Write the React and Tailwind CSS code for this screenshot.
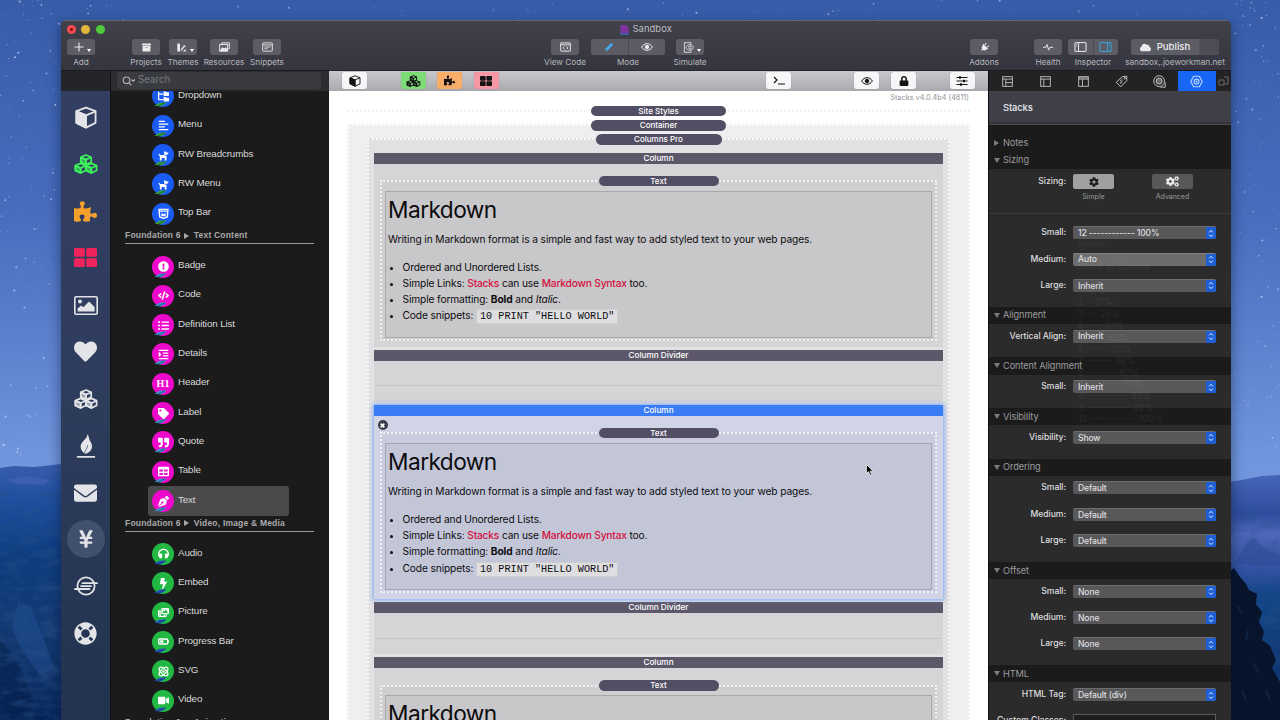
import React from 'react';
import {
  FaAlignLeft, FaArchive, FaBolt, FaCloud, FaCode, FaCog, FaCogs, FaDog, FaEnvelope, FaExclamationCircle,
  FaHeadphones, FaHeart, FaIndent, FaLifeRing, FaListUl, FaLock, FaPenNib, FaPlug, FaPuzzlePiece,
  FaQuoteRight, FaTable, FaTag, FaVideo, FaYenSign,
} from 'react-icons/fa';
import { FaFolderTree, FaPhotoFilm } from 'react-icons/fa6';

const SANS = "font-['Inter','Liberation_Sans',sans-serif]";
const HELV = "font-['Liberation_Sans',sans-serif]";

/* ---------- icons ---------- */

function CubeIcon({ className }) {
  return (
    <svg viewBox="0 0 24 24" className={className} fill="none" stroke="currentColor" strokeWidth="1.9" strokeLinejoin="round">
      <path d="M12 1.6 22 5.4V17.6L12 22.6 2 17.6V5.4Z" />
      <path d="M2 5.6 12 9.8 22 5.6M12 9.8V22.4" />
      <path d="M2 5.6 12 9.8V22.4L2 17.6Z" fill="currentColor" />
    </svg>
  );
}

function CubesIcon({ className }) {
  return (
    <svg viewBox="0 0 24 20" className={className} fill="none" stroke="currentColor" strokeWidth="1.7" strokeLinejoin="round">
      {[[6.4, 1], [1, 9.4], [11.8, 9.4]].map(([x, y]) => (
        <g key={`${x}-${y}`} transform={`translate(${x} ${y})`}>
          <path d="M5.6 0 10.8 2.2V7.2L5.6 9.6.4 7.2V2.2Z" />
          <path d="M.4 2.3 5.6 4.6 10.8 2.3M5.6 4.6V9.6" />
          <path d="M.4 2.3 5.6 4.6V9.6L.4 7.2Z" fill="currentColor" fillOpacity="0.6" />
        </g>
      ))}
    </svg>
  );
}

function GridIcon({ className }) {
  return (
    <svg viewBox="0 0 23 19" className={className} fill="currentColor">
      <rect width="10.8" height="8.8" rx="1.5" />
      <rect x="12.2" width="10.8" height="8.8" rx="1.5" />
      <rect y="10.2" width="10.8" height="8.8" rx="1.5" />
      <rect x="12.2" y="10.2" width="10.8" height="8.8" rx="1.5" />
    </svg>
  );
}

function PhotoIcon({ className }) {
  return (
    <svg viewBox="0 0 24 19" className={className} fill="currentColor">
      <rect x="0.8" y="0.8" width="22.4" height="17.4" rx="1.2" fill="none" stroke="currentColor" strokeWidth="1.6" />
      <circle cx="6" cy="5.6" r="2" />
      <path d="M3.6 15.6V12.6L7.2 9.4 9.4 11.2 15 5.6 20.6 11V15.6Z" />
    </svg>
  );
}

function FlameIcon({ className }) {
  return (
    <svg viewBox="0 0 20 24" className={className} fill="currentColor">
      <path d="M11.2 0C12.2 4.600 4.600 7.400 4.600 12.600c0 3.400 2 5.600 4.600 7.400 4.200-1.400 6.800-4.200 6.800-7.600C16 9.600 14.800 8.600 13.800 6.600 13 4.800 13 2 11.200 0Z" />
      <path d="M9.200 20C7.800 16.500 12 14.500 11.600 11" stroke="#2c3d60" strokeWidth="0.700" fill="none" />
      <rect x="0.800" y="22" width="18.400" height="1.700" rx="0.600" />
    </svg>
  );
}

function PlanetIcon({ className }) {
  return (
    <svg viewBox="0 0 24 20" className={className} fill="none" stroke="currentColor" strokeWidth="1.800" strokeLinecap="round">
      <circle cx="12" cy="10" r="8.600" />
      <path d="M8.500 7.200H23M7 10.100H17M1 13H15.500" />
    </svg>
  );
}

function EyeIcon({ className }) {
  return (
    <svg viewBox="0 0 24 16" className={className} fill="none" stroke="currentColor" strokeWidth="2">
      <path d="M1.200 8C4 3.500 7.800 1.400 12 1.400S20 3.500 22.800 8C20 12.500 16.200 14.600 12 14.600S4 12.500 1.200 8Z" />
      <circle cx="12" cy="8" r="3.600" fill="currentColor" />
    </svg>
  );
}

function TopBarIcon({ className }) {
  return (
    <svg viewBox="0 0 16 16" className={className} fill="none" stroke="currentColor" strokeWidth="2">
      <path d="M1.500 2H14.500L13.500 13 8 15 2.500 13Z" />
      <path d="M2 4.500H14" />
      <path d="M5 7 8 9.500 11 7V12H5Z" fill="currentColor" stroke="none" />
    </svg>
  );
}

function ProgressIcon({ className }) {
  return (
    <svg viewBox="0 0 16 10" className={className} fill="none" stroke="currentColor" strokeWidth="2">
      <rect x="1" y="1.300" width="13" height="7.400" rx="1.500" />
      <path d="M15.200 3.500V6.500" />
      <rect x="3" y="3.300" width="5" height="3.400" fill="currentColor" stroke="none" />
    </svg>
  );
}

function AtomIcon({ className }) {
  return (
    <svg viewBox="0 0 16 16" className={className} fill="none" stroke="currentColor" strokeWidth="1.800">
      <ellipse cx="8" cy="8" rx="8" ry="3.800" transform="rotate(45 8 8)" />
      <ellipse cx="8" cy="8" rx="8" ry="3.800" transform="rotate(-45 8 8)" />
      <circle cx="8" cy="8" r="1" fill="currentColor" />
    </svg>
  );
}

function H1Icon() {
  return <span className="font-['Liberation_Serif',serif] text-[10px] leading-none font-bold">H1</span>;
}

function ThemesIcon({ className }) {
  return (
    <svg viewBox="0 0 16 14" className={className} fill="currentColor">
      <rect x="0.500" y="0.500" width="4.200" height="13" rx="1" />
      <path d="M6 9.500 11.500 2.500 14 4.500 7 12.500H6Z" opacity="0.800" />
      <path d="M9.500 12.800 14 9.500V13.500H8.500Z" />
    </svg>
  );
}

function ResourcesIcon({ className }) {
  return (
    <svg viewBox="0 0 16 14" className={className} fill="none" stroke="currentColor" strokeWidth="1.400">
      <path d="M4 3.500V1H15V9.500H13" />
      <rect x="1" y="3.500" width="11.500" height="9.500" />
      <path d="M2 12 5 8 7.500 10 9.500 8 12 11V12.500H2Z" fill="currentColor" />
    </svg>
  );
}

function SnippetsIcon({ className }) {
  return (
    <svg viewBox="0 0 16 14" className={className} fill="none" stroke="currentColor" strokeWidth="1.300">
      <rect x="1" y="1" width="14" height="12" rx="0.800" />
      <path d="M1 4H15M3.500 7H12.500M3.500 9.500H8" />
    </svg>
  );
}

function ViewCodeIcon({ className }) {
  return (
    <svg viewBox="0 0 16 14" className={className} fill="none" stroke="currentColor" strokeWidth="1.400">
      <rect x="1" y="1" width="14" height="12" rx="0.500" />
      <path d="M1 3.800H15M6.500 6.200 4.500 8.300 6.500 10.400M9.500 6.200 11.500 8.300 9.500 10.400" />
    </svg>
  );
}

function SimulateIcon({ className }) {
  return (
    <svg viewBox="0 0 16 16" className={className} fill="none" stroke="currentColor" strokeWidth="1.200">
      <path d="M11.500 3.500V1H2V15H11.500V12.500" />
      <path d="M4 8C6 4.800 8 4 10 4S14 5 15.500 8C14 11 12 12 10 12S6 11.200 4 8Z" />
      <circle cx="10" cy="8" r="2" />
    </svg>
  );
}

function PencilIcon({ className }) {
  return (
    <svg viewBox="0 0 16 16" className={className} fill="currentColor">
      <path d="M2 14 3 10 11.500 1.500 14.500 4.500 6 13Z" />
    </svg>
  );
}

function PanelIcon({ className, right }) {
  return (
    <svg viewBox="0 0 16 13" className={className} fill="none" stroke="currentColor" strokeWidth="1.300">
      <rect x="0.800" y="0.800" width="14.400" height="11.400" rx="0.500" />
      <path d={right ? 'M10.500 1V12M12.500 3.500H13.700M12.500 5.500H13.700' : 'M5.500 1V12M2.500 3.500H3.700M2.500 5.500H3.700'} />
    </svg>
  );
}

function PulseIcon({ className }) {
  return (
    <svg viewBox="0 0 16 12" className={className} fill="none" stroke="currentColor" strokeWidth="1.500" strokeLinejoin="round">
      <path d="M0 6.500H4.500L6.500 2 9 11 11 6.500H16" />
    </svg>
  );
}

function LayoutIcon({ className, variant }) {
  const paths = ['M1 4.500H15M5.500 4.500V15M5.500 9.500H15', 'M1 4.500H15M5.500 4.500V15', 'M1 4.500H15M6.500 4.500V15M1 2.800H15'];
  return (
    <svg viewBox="0 0 16 16" className={className} fill="none" stroke="currentColor" strokeWidth="1.300">
      <rect x="1" y="1" width="14" height="14" />
      <path d={paths[variant]} />
    </svg>
  );
}

function PriceTagIcon({ className }) {
  return (
    <svg viewBox="0 0 16 16" className={className} fill="none" stroke="currentColor" strokeWidth="1.200" strokeLinejoin="round">
      <path d="M9 2 14.500 1.500 14.500 7 7 14.500 1.500 9Z" />
      <circle cx="12" cy="4" r="0.900" />
      <path d="M9.500 6.500C7.500 5 6 7 7.500 8S8.500 10.800 6 9.500" />
    </svg>
  );
}

function TargetIcon({ className }) {
  return (
    <svg viewBox="0 0 16 16" className={className} fill="none" stroke="currentColor" strokeWidth="1.200">
      <circle cx="7.500" cy="7.500" r="6.600" />
      <circle cx="7.500" cy="7.500" r="3.700" fill="currentColor" fillOpacity="0.450" />
      <path d="M9 15H15V9" />
    </svg>
  );
}

function HexIcon({ className }) {
  return (
    <svg viewBox="0 0 16 16" className={className} fill="none" stroke="currentColor" strokeWidth="1.400">
      <path d="M4.500 1.500H11.500L15 8 11.500 14.500H4.500L1 8Z" strokeLinejoin="round" />
      <circle cx="8" cy="8" r="3" />
      <circle cx="8" cy="8" r="0.600" />
    </svg>
  );
}

/* ---------- desktop ---------- */

function rand(seed) {
  const n = Math.sin(seed * 127.1) * 43758.5453;
  return n - Math.floor(n);
}

const STARS = Array.from({ length: 520 }, (_, i) => {
  const side = i % 5;
  const x = side < 2 ? rand(i + 1) * 61 : side < 4 ? 1231 + rand(i + 1) * 49 : rand(i + 1) * 1280;
  const y = side === 4 ? rand(i + 900) * 20 : Math.pow(rand(i + 900), 1.6) * 460;
  return { x, y, r: 0.3 + Math.pow(rand(i + 3000), 5) * 0.8, o: 0.2 + rand(i + 5000) * 0.5 };
});

function Desktop() {
  return (
    <svg viewBox="0 0 1280 720" className="absolute inset-0 h-full w-full">
      <defs>
        <linearGradient id="sky" x1="0" y1="0" x2="0" y2="1">
          <stop offset="0" stopColor="#375da9" />
          <stop offset="0.300" stopColor="#476dbd" />
          <stop offset="0.640" stopColor="#7096dd" />
        </linearGradient>
        <linearGradient id="hillLeft" x1="0" y1="0" x2="0" y2="1">
          <stop offset="0" stopColor="#385dac" />
          <stop offset="0.140" stopColor="#1f4f9f" />
          <stop offset="0.350" stopColor="#0e3d80" />
          <stop offset="0.700" stopColor="#12386f" />
          <stop offset="1" stopColor="#06265a" />
        </linearGradient>
        <linearGradient id="hillRight" x1="0" y1="0" x2="0" y2="1">
          <stop offset="0" stopColor="#4565b6" />
          <stop offset="0.160" stopColor="#2f4d9f" />
          <stop offset="0.240" stopColor="#5068ba" />
          <stop offset="0.380" stopColor="#3553a4" />
          <stop offset="0.480" stopColor="#144688" />
          <stop offset="1" stopColor="#0b2d63" />
        </linearGradient>
        <filter id="rock" x="0" y="0" width="1" height="1">
          <feTurbulence type="fractalNoise" baseFrequency="0.05 0.12" numOctaves="4" seed="4" />
          <feColorMatrix values="0 0 0 0 0.02  0 0 0 0 0.08  0 0 0 0 0.25  2.2 0 0 0 -0.9" />
        </filter>
      </defs>
      <rect width="1280" height="720" fill="url(#sky)" />
      {STARS.map((s, i) => <circle key={i} cx={s.x} cy={s.y} r={s.r} fill="#dbe6ff" opacity={s.o} />)}
      <path d="M0 468 14 466 34 467 61 464V720H0Z" fill="url(#hillLeft)" />
      <path d="M5 480 24 476 50 480 44 485 18 484Z" fill="#4f6cba" opacity="0.450" />
      <path d="M18 602 30 606 44 640 54 668 40 676 22 650 12 628Z" fill="#2c5ca6" opacity="0.350" />
      <path d="M0 640 16 660 30 690 42 720H0Z" fill="#041c44" opacity="0.450" />
      <rect x="0" y="490" width="61" height="230" filter="url(#rock)" opacity="0.600" />
      <path d="M1200 486 1236 481 1262 476 1280 475V720H1200Z" fill="url(#hillRight)" />
      <path d="M1236 562 1246 544 1254 538 1266 550 1280 556V566L1256 566Z" fill="#2a478f" opacity="0.500" />
      <rect x="1231" y="500" width="49" height="220" filter="url(#rock)" opacity="0.450" />
      <path d="M1225 575 1234 568 1240 577 1246 584 1249 590 1257 594 1256 604 1262 612 1259 622 1264 632 1262 640 1270 646 1276 660 1272 668 1280 682V720H1225Z" fill="#07142b" />
      <path d="M1238 606 1242 614M1248 630 1246 640M1254 664 1258 672M1242 690 1246 700M1266 690 1270 700" stroke="#16325c" strokeWidth="2" fill="none" opacity="0.500" />
    </svg>
  );
}

/* ---------- toolbar ---------- */

function ToolItem({ label, className, children }) {
  return (
    <div className={`flex shrink-0 flex-col items-center ${className}`}>
      <div className="flex h-4 w-full overflow-hidden rounded-[3px] bg-[#5b5c64] text-[#ececee]">{children}</div>
      <span className="mt-px text-[8.200px] leading-[12px] whitespace-nowrap text-[#b6b7bd]">{label}</span>
    </div>
  );
}

function Cell({ children, className = '' }) {
  return <div className={`flex flex-1 items-center justify-center ${className}`}>{children}</div>;
}

function Caret() {
  return <span className="mt-[7px] ml-[3px] h-0 w-0 border-x-2 border-t-[3px] border-x-transparent border-t-white" />;
}

function Toolbar() {
  return (
    <header className="h-[50px] border-t border-[#62646d] bg-gradient-to-b from-[#40414a] to-[#34353e]">
      <div className="flex h-[17px] items-center pl-[5.500px]">
        <div className="flex w-[200px] gap-[5.600px]">
          <span className="flex h-[9px] w-[9px] items-center justify-center rounded-full bg-[#f64c50]"><i className="h-[3px] w-[3px] rounded-full bg-[#7c0a0c]" /></span>
          <span className="h-[9px] w-[9px] rounded-full bg-[#dfb63a]" />
          <span className="h-[9px] w-[9px] rounded-full bg-[#4fc93c]" />
        </div>
        <div className="ml-[353px] flex items-center gap-[4px] text-[9.500px] text-[#bcbdc2]">
          <svg viewBox="0 0 9 11" className="h-[10px] w-[9px]">
            <path d="M0 0H6.500L9 2.500V11H0Z" fill="#7d369c" />
            <path d="M0 9H9V11H0Z" fill="#3c5fb0" />
          </svg>
          Sandbox
        </div>
      </div>
      <div className="flex pt-px pl-[6px]">
        <ToolItem label="Add" className="w-7">
          <Cell className="pl-[3px]">
            <svg viewBox="0 0 10 10" className="h-[10px] w-[10px] shrink-0" stroke="currentColor" strokeWidth="1.100"><path d="M5 .5V9.500M.5 5H9.500" /></svg>
            <Caret />
          </Cell>
        </ToolItem>
        <ToolItem label="Projects" className="ml-[37px] w-7"><Cell><FaArchive className="h-[9px] w-[9px]" /></Cell></ToolItem>
        <ToolItem label="Themes" className="ml-[9px] w-7"><Cell className="pl-1"><ThemesIcon className="h-[9px] w-[10px]" /><Caret /></Cell></ToolItem>
        <ToolItem label="Resources" className="ml-[13px] w-7"><Cell><ResourcesIcon className="h-[10px] w-[11px]" /></Cell></ToolItem>
        <ToolItem label="Snippets" className="ml-[15px] w-7"><Cell><SnippetsIcon className="h-[10px] w-[11px]" /></Cell></ToolItem>
        <ToolItem label="View Code" className="ml-[270px] w-7"><Cell><ViewCodeIcon className="h-[10px] w-[11px]" /></Cell></ToolItem>
        <ToolItem label="Mode" className="ml-[12px] w-[74px]">
          <Cell className="border-r border-[#494a52]"><PencilIcon className="h-[10px] w-[10px] text-[#45aef0]" /></Cell>
          <Cell><EyeIcon className="h-[8px] w-[12px]" /></Cell>
        </ToolItem>
        <ToolItem label="Simulate" className="ml-[11px] w-7"><Cell className="pl-1"><SimulateIcon className="h-[11px] w-[11px]" /><Caret /></Cell></ToolItem>
        <ToolItem label="Addons" className="ml-[266px] w-7"><Cell><FaPlug className="h-[9px] w-[9px] rotate-45" /></Cell></ToolItem>
        <ToolItem label="Health" className="ml-[36px] w-7"><Cell><PulseIcon className="h-[8px] w-[10px]" /></Cell></ToolItem>
        <ToolItem label="Inspector" className="ml-[6px] w-[50px]">
          <Cell className="border-r border-[#494a52]"><PanelIcon className="h-[10px] w-[13px]" /></Cell>
          <Cell><PanelIcon right className="h-[10px] w-[13px] text-[#38a5e2]" /></Cell>
        </ToolItem>
        <ToolItem label="sandbox,.joeworkman.net" className="ml-[13px] w-[88px]">
          <Cell className="gap-[6px] text-[9.600px] font-medium"><FaCloud className="h-[11px] w-[11px]" />Publish</Cell>
          <span className="w-[20px] border-l border-[#53545c] bg-[#4c4d55] text-center text-[8px] leading-4 text-[#5a5b62]">–</span>
        </ToolItem>
      </div>
    </header>
  );
}

/* ---------- left side ---------- */

const RAIL = [
  { name: 'cube', icon: CubeIcon, cls: 'h-[23px] w-[24px] text-[#e3e4e8]' },
  { name: 'cubes', icon: CubesIcon, cls: 'h-[20px] w-[24px] text-[#3cf15a]' },
  { name: 'puzzle', icon: FaPuzzlePiece, cls: 'h-[23px] w-[23px] text-[#f5a02c]' },
  { name: 'grid', icon: GridIcon, cls: 'mb-[2px] h-[19px] w-[23px] text-[#f0245c]' },
  { name: 'photo', icon: PhotoIcon, cls: 'h-[19px] w-[24px] text-[#e3e4e8]' },
  { name: 'heart', icon: FaHeart, cls: 'h-[23px] w-[23px] text-[#e3e4e8]' },
  { name: 'stacks', icon: CubesIcon, cls: 'h-[20px] w-[24px] text-[#e3e4e8]' },
  { name: 'flame', icon: FlameIcon, cls: 'h-[24px] w-[20px] text-[#e3e4e8]' },
  { name: 'mail', icon: FaEnvelope, cls: 'h-[24px] w-[23px] text-[#e3e4e8]' },
  { name: 'yen', icon: FaYenSign, cls: 'h-[20px] w-[20px] text-[#e3e4e8]', ring: true },
  { name: 'planet', icon: PlanetIcon, cls: 'h-[20px] w-[24px] text-[#e3e4e8]' },
  { name: 'ring', icon: FaLifeRing, cls: 'h-[23px] w-[23px] text-[#e3e4e8]' },
];

function Rail() {
  return (
    <nav className="w-[49px] shrink-0">
      <div className="h-[21px] border-t border-[#1b1b1f] bg-[#242529]" />
      <div className="flex h-[629px] flex-col items-center bg-gradient-to-b from-[#323e62] via-[#2e3c5c] to-[#213350] pt-[3px]">
        {RAIL.map(({ name, icon: Icon, cls, ring }) => (
          <div key={name} className="flex h-[46.900px] shrink-0 items-center justify-center">
            <span className={`flex h-[38px] w-[38px] items-center justify-center rounded-full ${ring ? 'bg-[#41506e]' : ''}`}>
              <Icon className={cls} />
            </span>
          </div>
        ))}
      </div>
    </nav>
  );
}

const GROUPS = [
  {
    tone: 'bg-[#1a5cf3]',
    leaf: '#38a832',
    items: [['Dropdown', FaFolderTree], ['Menu', FaAlignLeft], ['RW Breadcrumbs', FaDog], ['RW Menu', FaDog], ['Top Bar', TopBarIcon]],
  },
  {
    title: 'Text Content',
    tone: 'bg-[#ee08cb]',
    leaf: '#2f9fd0',
    items: [
      ['Badge', FaExclamationCircle], ['Code', FaCode], ['Definition List', FaListUl], ['Details', FaIndent], ['Header', H1Icon],
      ['Label', FaTag], ['Quote', FaQuoteRight], ['Table', FaTable], ['Text', FaPenNib],
    ],
  },
  {
    title: 'Video, Image & Media',
    tone: 'bg-[#22b844]',
    leaf: '#2350c8',
    items: [['Audio', FaHeadphones], ['Embed', FaBolt], ['Picture', FaPhotoFilm], ['Progress Bar', ProgressIcon], ['SVG', AtomIcon], ['Video', FaVideo]],
  },
  { title: 'Animation', items: [] },
];

function StackRow({ label, icon: Icon, tone, leaf, selected }) {
  return (
    <div className={`ml-[37px] flex h-[29.330px] w-[141px] items-center rounded-[3px] pl-[4px] ${selected ? 'bg-[#4a494b]' : ''}`}>
      <span className={`relative flex h-[22px] w-[22px] shrink-0 items-center justify-center rounded-full text-white ${tone}`}>
        <Icon className="h-[11px] w-[11px]" />
        <svg viewBox="0 0 16 6" className="absolute bottom-0 left-[1px] h-[5px] w-[15px]">
          <path d="M0 5C4 4 4 1 9 1 12 1 13 0 15 0 14 2 12 4.500 8 5 5 5.500 3 4.500 0 5Z" fill={leaf} />
          <path d="M5 4.500C8 4 10 2 13 1.200" stroke="#15323a" strokeWidth="0.700" fill="none" />
        </svg>
      </span>
      <span className="mb-[2px] ml-[4px] text-[9.800px] tracking-[-0.130px] whitespace-nowrap text-[#d9d9da]">{label}</span>
    </div>
  );
}

function Library() {
  return (
    <aside className={`w-[219px] shrink-0 overflow-hidden border-l border-[#101012] bg-[#1b1b1b] ${HELV}`}>
      <div className="h-[21px] border-t border-[#1b1b1f] bg-[#2c2d31] px-[6px] pt-px">
        <div className="flex h-[17px] w-[204px] items-center rounded-[3px] bg-[#3a3b40] pl-[5px]">
          <svg viewBox="0 0 14 10" className="h-[10px] w-[14px]" fill="none" stroke="#b5b6ba" strokeWidth="1.100">
            <circle cx="4.500" cy="4.300" r="3.300" />
            <path d="M7 6.800 9.300 9.300M9.500 3.500 11.200 5.200 12.900 3.500" />
          </svg>
          <span className={`ml-[2px] text-[9.700px] text-[#78797f] ${SANS}`}>Search</span>
        </div>
      </div>
      <div className="h-[629px] overflow-hidden">
        <div className="-mt-[9.300px]">
          {GROUPS.map((group) => (
            <section key={group.title || 'nav'}>
              {group.title && (
                <h4 className="ml-[14px] h-[23.500px] w-[189px]">
                  <div className="flex h-[16px] items-center border-b border-[#98989a] text-[8.500px] font-bold tracking-[0.200px] text-[#a9a9ab]">
                    Foundation 6 <span className="mr-[5px] ml-[3px] h-0 w-0 border-y-[3px] border-l-[5px] border-y-transparent border-l-[#a9a9ab]" /> {group.title}
                  </div>
                </h4>
              )}
              {group.items.map(([label, icon]) => (
                <StackRow key={label} label={label} icon={icon} tone={group.tone} leaf={group.leaf} selected={label === 'Text'} />
              ))}
            </section>
          ))}
        </div>
      </div>
    </aside>
  );
}

/* ---------- canvas ---------- */

function BarButton({ tone = 'bg-[#f6f6f8]', className = '', children }) {
  return (
    <span className={`flex h-[17px] w-[25px] shrink-0 items-center justify-center rounded-[2px] text-[#141414] shadow-[0_0_1px_rgba(0,0,0,0.350)] ${tone} ${className}`}>
      {children}
    </span>
  );
}

function Pill({ children, className }) {
  return (
    <div className={`relative mx-auto h-[10.500px] rounded-full bg-[#524e63] text-center text-[8px] leading-[10.500px] font-medium text-white ${className}`}>
      {children}
    </div>
  );
}

function TextStack({ tint }) {
  return (
    <div className={`mx-[6px] h-[161px] border-2 border-dotted border-white/75 ${tint ? 'bg-[#cbcddf]' : 'bg-[#cfced0]'}`}>
      <Pill className="-mt-[6.500px] w-[120px]">Text</Pill>
      <div className={`mx-[3px] mt-[4.500px] h-[147px] border pl-[2px] text-[#0c0c0f] ${tint ? 'border-[#a3a6b8] bg-[#c3c6d7]' : 'border-[#a9a8aa] bg-[#c8c7c9]'}`}>
        <h2 className="mt-[2px] text-[22.700px] leading-[32px] tracking-[-0.550px]">Markdown</h2>
        <p className="mt-[5px] text-[10.200px] leading-[17px] tracking-[-0.100px]">Writing in Markdown format is a simple and fast way to add styled text to your web pages.</p>
        <ul className="mt-[11px] list-disc pl-[14.500px] text-[10.200px] leading-[16.200px] tracking-[-0.120px]">
          <li>Ordered and Unordered Lists.</li>
          <li>Simple Links: <span className="font-medium tracking-[-0.180px] text-[#d3103f]">Stacks</span> can use <span className="font-medium tracking-[-0.180px] text-[#d3103f]">Markdown Syntax</span> too.</li>
          <li>Simple formatting: <b>Bold</b> and <i>Italic</i>.</li>
          <li>
            Code snippets: <code className="border border-[#cfced0] bg-[#dedddf] px-[3px] py-px font-['Liberation_Mono',monospace] text-[10.200px] tracking-normal">10 PRINT "HELLO WORLD"</code>
          </li>
        </ul>
      </div>
    </div>
  );
}

function ColumnBar({ children, active }) {
  return (
    <div className={`h-[10.800px] text-center text-[8.200px] leading-[11px] font-medium text-white ${active ? 'bg-[#3a7cf5]' : 'bg-[#5d5869]'}`}>{children}</div>
  );
}

function Column({ active }) {
  return (
    <div className={`relative mb-[3px] h-[194.300px] ${active ? 'bg-[#d0d4e6] shadow-[0_0_4px_1px_#78a6f5]' : 'bg-[#d5d4d6]'}`}>
      <ColumnBar active={active}>Column</ColumnBar>
      {active && (
        <span className="absolute top-[15px] left-[3.500px] flex h-[10px] w-[10px] items-center justify-center rounded-full bg-[#3d3b49]">
          <svg viewBox="0 0 6 6" className="h-[5px] w-[5px]" stroke="white" strokeWidth="2"><path d="M.8.800 5.200 5.200M5.200.8.800 5.200" /></svg>
        </span>
      )}
      <div className="pt-[16.500px]"><TextStack tint={active} /></div>
    </div>
  );
}

function Divider() {
  return (
    <div className="mb-[3px] h-[52px] bg-[#d5d4d6]">
      <ColumnBar>Column Divider</ColumnBar>
      <div className="mx-[2px] mt-[24.500px] border-t border-[#c5c4c6]" />
    </div>
  );
}

function Canvas() {
  return (
    <main className="relative w-[659px] shrink-0 overflow-hidden bg-white">
      <div className="flex h-[21px] items-center border-t border-[#25262b] bg-gradient-to-b from-[#c9c9cd] to-[#a9aaaf] pb-px pl-[13px]">
        <BarButton><CubeIcon className="h-[12px] w-[12px]" /></BarButton>
        <BarButton tone="bg-[#7edc77]" className="ml-[33.500px]"><CubesIcon className="h-[12px] w-[15px]" /></BarButton>
        <BarButton tone="bg-[#f8ad69]" className="ml-[11.500px]"><FaPuzzlePiece className="h-[11px] w-[11px]" /></BarButton>
        <BarButton tone="bg-[#f597a4]" className="ml-[11.500px]"><GridIcon className="h-[10px] w-[12px]" /></BarButton>
        <BarButton className="ml-[267.500px]">
          <svg viewBox="0 0 12 9" className="h-[9px] w-[12px]" fill="none" stroke="currentColor" strokeWidth="1.200"><path d="M1 1 4 4 1 7M5 8H12" /></svg>
        </BarButton>
        <BarButton className="ml-[63px]"><EyeIcon className="h-[8px] w-[12px]" /></BarButton>
        <BarButton className="ml-[12px]"><FaLock className="h-[10px] w-[10px]" /></BarButton>
        <BarButton className="ml-[33.500px]">
          <svg viewBox="0 0 12 10" className="h-[10px] w-[12px]" fill="none" stroke="currentColor" strokeWidth="1.100">
            <path d="M.5 1.500H11.500M.5 5H11.500M.5 8.500H11.500" />
            <path d="M4 .3V2.700M8 3.800V6.200M5 7.300V9.700" strokeWidth="2" />
          </svg>
        </BarButton>
      </div>
      <div className="h-[629px] overflow-hidden pr-[18px] pl-[18px]">
        <p className="h-[19px] pr-px text-right text-[7.300px] leading-[13px] text-[#919196]">Stacks v4.0.4b4 (4811)</p>
        <div className="h-[14.300px] border-t-2 border-dotted border-[#f1f1f1]">
          <Pill className="-mt-[6.500px] w-[134.500px]">Site Styles</Pill>
        </div>
        <div className="border-2 border-dotted border-white/80 bg-[#efeff0] px-[18px]">
          <Pill className="-mt-[6px] w-[134.500px]">Container</Pill>
          <div className="mt-[7px] h-[800px] border-2 border-dotted border-white/80 bg-[#e1e0e2] px-[5px]">
            <Pill className="-mt-[5.800px] mb-[8.300px] w-[126px]">Columns Pro</Pill>
            <Column />
            <Divider />
            <Column active />
            <Divider />
            <Column />
          </div>
        </div>
      </div>
      <svg viewBox="0 0 8 12" className="absolute top-[394px] left-[537px] h-[12px] w-[8px]">
        <path d="M.5.500V9.500L2.600 7.600 4 11.300 5.600 10.600 4.200 7.200H7Z" fill="black" stroke="white" strokeWidth="0.700" />
      </svg>
    </main>
  );
}

/* ---------- inspector ---------- */

const SECTIONS = [
  ['Alignment', [['Vertical Align:', 'Inherit']]],
  ['Content Alignment', [['Small:', 'Inherit']]],
  ['Visibility', [['Visibility:', 'Show']]],
  ['Ordering', [['Small:', 'Default'], ['Medium:', 'Default'], ['Large:', 'Default']]],
  ['Offset', [['Small:', 'None'], ['Medium:', 'None'], ['Large:', 'None']]],
];

// options of the size menu, drawn while it fades out
const FADING_OPTIONS = [
  'Inherit', '', 'Shrink to Content', '', '1 - 8%', '2 -- 17%', '3 --- 25%', '4 ---- 33%', '5 ----- 42%', '6 ------ 50%',
  '7 ------- 58%', '8 -------- 67%', '9 --------- 75%', '10 ---------- 83%', '11 ----------- 92%', '12 ------------ 100%',
];

function FadingMenu() {
  return (
    <div className="pointer-events-none absolute top-[169px] left-[89px] text-[8.600px] leading-[11.700px] font-medium text-white/5">
      {FADING_OPTIONS.map((option, i) => <div key={i} className="h-[11.700px] whitespace-nowrap">{option}</div>)}
    </div>
  );
}

function SelectRow({ label, value, bright }) {
  return (
    <div className="flex h-[26.350px] items-start pt-[5.600px] text-[8.600px] leading-[12.500px] tracking-[-0.050px] text-[#dededf]">
      <span className="w-[77px] shrink-0 text-right font-medium">{label}</span>
      <div className={`ml-[7px] flex h-[13px] w-[143px] items-center overflow-hidden rounded-[2px] border-t pl-[5px] font-medium ${bright ? 'border-[#818182] bg-[#6d6d6e]' : 'border-[#6d6d6e] bg-[#58585a]'}`}>
        <span className="flex-1 tracking-[-0.150px]">{value}</span>
        <span className="flex h-full w-[10px] items-center justify-center bg-[#1f5fd6]">
          <svg viewBox="0 0 6 10" className="h-[9px] w-[6px]" fill="none" stroke="white" strokeWidth="1"><path d="M1 3.700 3 1.500 5 3.700M1 6.300 3 8.500 5 6.300" /></svg>
        </span>
      </div>
    </div>
  );
}

function SectionTitle({ children, closed }) {
  return (
    <h5 className="flex h-[17.300px] items-center bg-[#1b1b1c] pl-[5px] text-[9.200px] tracking-[-0.080px] text-[#9c9c9e]">
      <span className="flex w-[9px] items-center">
        {closed
          ? <i className="h-0 w-0 border-y-[3px] border-l-[5px] border-y-transparent border-l-[#7c7c7e]" />
          : <i className="h-0 w-0 border-x-[3px] border-t-[5px] border-x-transparent border-t-[#7c7c7e]" />}
      </span>
      {children}
    </h5>
  );
}

function SizeMode({ label, active, className, children }) {
  return (
    <div className={`flex w-[41px] shrink-0 flex-col items-center ${className}`}>
      <span className={`flex h-[15px] w-full items-center justify-center rounded-[2px] ${active ? 'bg-[#a09fa1] text-[#1e1e1f]' : 'bg-[#58585a] text-[#ececec]'}`}>{children}</span>
      <span className="mt-[2px] text-[7px] leading-[11px] text-[#9b9b9d]">{label}</span>
    </div>
  );
}

function Inspector() {
  return (
    <aside className="relative w-[243px] shrink-0 overflow-hidden border-l border-[#0e0e0f] bg-[#2b2b2c]">
      <div className="flex h-[21px] items-center border-t border-[#1b1b1f] bg-[#232325] text-[#c4c4c6]">
        <Cell className="max-w-[37.800px]"><LayoutIcon variant={0} className="h-[13px] w-[11px]" /></Cell>
        <Cell className="max-w-[37.800px]"><LayoutIcon variant={1} className="h-[13px] w-[11px]" /></Cell>
        <Cell className="max-w-[37.800px]"><LayoutIcon variant={2} className="h-[13px] w-[11px]" /></Cell>
        <Cell className="max-w-[37.800px]"><PriceTagIcon className="h-[13px] w-[13px]" /></Cell>
        <Cell className="max-w-[37.800px]"><TargetIcon className="h-[13px] w-[13px]" /></Cell>
        <div className="flex h-full w-[38px] items-center justify-center bg-[#1766f4] text-[#bcd4ff]"><HexIcon className="h-[13px] w-[13px]" /></div>
        <svg viewBox="0 0 11 11" className="ml-[2px] h-[11px] w-[11px]" fill="none" stroke="#6b6b6d" strokeWidth="1"><path d="M1 4H6V9H1ZM6 1H10V8H6" /></svg>
      </div>
      <div className="h-[33px] border-b-2 border-[#34353b] bg-[#3f4048] pl-[14px] text-[9.300px] leading-[33px] font-semibold tracking-[-0.150px] text-[#dcdcdf]">Stacks</div>
      <div className="border-t border-[#4a4b50] bg-[#1b1b1c] pt-[9.300px]">
        <SectionTitle closed>Notes</SectionTitle>
        <SectionTitle>Sizing</SectionTitle>
      </div>
      <div className="h-[51.700px]">
        <div className="flex h-[45px] border-b border-[#3b3b3c] pt-[5.600px] text-[8.600px]">
          <span className="w-[77px] shrink-0 text-right leading-[15px] font-medium text-[#dededf]">Sizing:</span>
          <SizeMode label="Simple" active className="ml-[7px]"><FaCog className="h-[10px] w-[10px]" /></SizeMode>
          <SizeMode label="Advanced" className="ml-[38px]"><FaCogs className="h-[11px] w-[13px]" /></SizeMode>
        </div>
      </div>
      <div className="pb-[7px]">
        <SelectRow label="Small:" value="12 ------------ 100%" />
        <SelectRow label="Medium:" value="Auto" bright />
        <SelectRow label="Large:" value="Inherit" />
      </div>
      {SECTIONS.map(([title, rows]) => (
        <section key={title}>
          <SectionTitle>{title}</SectionTitle>
          <div className="pb-[7px]">{rows.map(([label, value]) => <SelectRow key={label} label={label} value={value} />)}</div>
        </section>
      ))}
      <SectionTitle>HTML</SectionTitle>
      <SelectRow label="HTML Tag:" value="Default (div)" />
      <div className="flex text-[8.600px]">
        <span className="w-[77px] shrink-0 pt-[5px] text-right font-medium text-[#dededf]">Custom Classes:</span>
        <span className="mt-[5.500px] ml-[7px] h-[14px] w-[143px] border border-[#5a5a5b] bg-[#1e1e1f]" />
      </div>
      <FadingMenu />
    </aside>
  );
}

export default function App() {
  return (
    <div className={`relative h-[720px] w-[1280px] overflow-hidden ${SANS}`}>
      <Desktop />
      <div className="relative mt-[20px] ml-[61px] h-[700px] w-[1170px] overflow-hidden rounded-t-[5px] shadow-[0_4px_14px_0px_rgba(8,16,50,0.500)]">
        <Toolbar />
        <div className="flex h-[650px]">
          <Rail />
          <Library />
          <Canvas />
          <Inspector />
        </div>
      </div>
    </div>
  );
}
